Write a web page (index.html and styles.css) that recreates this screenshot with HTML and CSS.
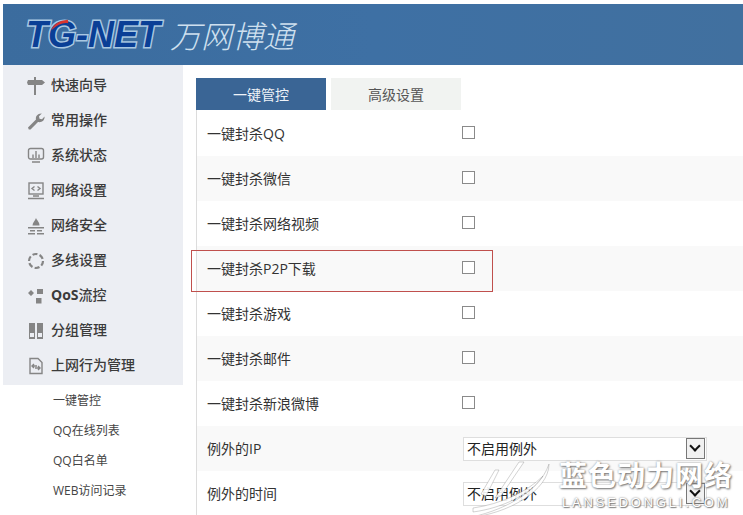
FILE: index.html
```html
<!DOCTYPE html>
<html lang="zh-CN">
<head>
    <meta charset="UTF-8">
    <meta name="viewport" content="width=device-width, initial-scale=1.0">
    <title>TG-NET 万网博通</title>
    <link rel="stylesheet" href="styles.css">
</head>
<body>
    <div class="page">
        <div class="top-bar">
            <span class="logo-en">TG-NET<svg class="logo-swoosh" viewBox="0 0 22 14"><path d="M1 13C4 6 10 2 20 1c1 2 1 3 0 4-6-1-12 2-19 8z"/></svg></span>
            <span class="logo-cn">万网博通</span>
        </div>
        <div class="layout">
            <div class="sidebar">
                <ul class="menu">
                    <li>
                        <svg viewBox="0 0 18 18"><path d="M7 0h2v3h6l3 2.500L15 8H9v10H7V8H1L0 5.500 1 3h6z"/></svg>
                        <span>快速向导</span>
                    </li>
                    <li>
                        <svg viewBox="0 0 18 18"><path d="M1 15.500 9 7.500C8.300 4.500 10.500 1.300 14.800 1.500L12 4.300l.5 2.500 2.500.5 2.500-2.800C18 8.500 14.500 10.800 11 10L3.500 17.500H1.800z"/></svg>
                        <span>常用操作</span>
                    </li>
                    <li>
                        <svg class="line" viewBox="0 0 18 18"><rect x="1.500" y="1.500" width="15" height="10.500" rx="2"/><path d="M9 4v7M6 7.500V11M12 7.500V11M5 15h8"/></svg>
                        <span>系统状态</span>
                    </li>
                    <li>
                        <svg class="line" viewBox="0 0 18 18"><rect x="2" y="1" width="14" height="11"/><path d="M7.500 4.500 5 6.500l2.500 2M10.500 4.500l2.500 2-2.500 2M1 16.500h16M6 14h6"/></svg>
                        <span>网络设置</span>
                    </li>
                    <li>
                        <svg viewBox="0 0 18 18"><path d="M9 1c1 2.500 3.500 4 3.500 7.500H5.500C5.500 5.500 8 4 9 1zM1 10h16v1.500H1zM3 13h5v1.500H3zM10 13h5v1.500h-5zM1 16h7v1.500H1zM10 16h7v1.500h-7z"/></svg>
                        <span>网络安全</span>
                    </li>
                    <li>
                        <svg class="line wide" viewBox="0 0 18 18"><circle cx="9" cy="9" r="7" stroke-dasharray="5 2.300"/></svg>
                        <span>多线设置</span>
                    </li>
                    <li>
                        <svg viewBox="0 0 18 18"><path d="M1 6l3-3 3 3-3 3zM10 2h6v5h-6zM9 11h5.500v5.500H9z"/></svg>
                        <span><b class="latin">QoS</b>流控</span>
                    </li>
                    <li>
                        <svg viewBox="0 0 18 18"><path d="M2 1h6v16H2zM10 1h6v16h-6z"/><path class="cut" d="M3 11h4v4H3zM11 11h4v4h-4z"/></svg>
                        <span>分组管理</span>
                    </li>
                    <li>
                        <svg class="line" viewBox="0 0 18 18"><path d="M3 1.500h8l4 4v11H3zM7 7l-2 2 2 2M11 9l2 2-2 2M5 9h5M8 11h5"/></svg>
                        <span>上网行为管理</span>
                    </li>
                </ul>
                <ul class="submenu">
                    <li>一键管控</li>
                    <li>QQ在线列表</li>
                    <li>QQ白名单</li>
                    <li>WEB访问记录</li>
                </ul>
            </div>
            <div class="content">
                <div class="tabs">
                    <div class="tab active">一键管控</div>
                    <div class="tab">高级设置</div>
                </div>
                <div class="panel">
                    <div class="row"><span class="row-label">一键封杀QQ</span><span class="check"></span></div>
                    <div class="row"><span class="row-label">一键封杀微信</span><span class="check"></span></div>
                    <div class="row"><span class="row-label">一键封杀网络视频</span><span class="check"></span></div>
                    <div class="row"><span class="row-label">一键封杀P2P下载</span><span class="check"></span></div>
                    <div class="row"><span class="row-label">一键封杀游戏</span><span class="check"></span></div>
                    <div class="row"><span class="row-label">一键封杀邮件</span><span class="check"></span></div>
                    <div class="row"><span class="row-label">一键封杀新浪微博</span><span class="check"></span></div>
                    <div class="row"><span class="row-label">例外的IP</span><span class="select">不启用例外<span class="arrow"></span></span></div>
                    <div class="row"><span class="row-label">例外的时间</span><span class="select">不启用例外<span class="arrow"></span></span></div>
                </div>
            </div>
        </div>
        <div class="red-box"></div>
        <div class="watermark">
            <svg class="swoosh" viewBox="0 0 90 60"><path d="M2 58C34 52 74 34 84 4 84 30 44 54 2 58z"/><path d="M30 38 54 2h5L36 36z"/><path d="M16 34 30 10h4L21 36z"/><path d="M8 48C36 44 62 32 78 16 66 34 38 48 8 52z"/></svg>
            <div class="mark-cn">蓝色动力网络</div>
            <div class="mark-en">LANSEDONGLI.COM</div>
        </div>
    </div>
</body>
</html>
```

FILE: styles.css
```css
html, body {
    margin: 0;
    padding: 0;
    background-color: #fff;
}

.page {
    position: relative;
    width: 743px;
    height: 515px;
    overflow: hidden;
    padding: 4px 0 0 3px;
    box-sizing: border-box;
    font-family: "Open Sans", "Noto Sans CJK SC", sans-serif;
    color: #333;
}

.top-bar {
    height: 61px;
    display: flex;
    align-items: center;
    gap: 10px;
    padding-left: 23px;
    background: linear-gradient(90deg, #3b6c9e, #3e70a4 50%, #41709f);
}

.logo-en {
    position: relative;
    font-family: "Liberation Sans", sans-serif;
    font-size: 36px;
    font-weight: bold;
    font-style: italic;
    color: #0a3f96;
    -webkit-text-stroke: 3px #a9c8e2;
    paint-order: stroke fill;
}

.logo-swoosh {
    position: absolute;
    left: 24px;
    top: 5px;
    width: 20px;
    height: 12px;
    fill: #d8352f;
}

.logo-cn {
    font-family: "Noto Sans CJK SC", sans-serif;
    font-size: 31px;
    font-style: italic;
    font-weight: 300;
    color: #cfe0ef;
}

.layout {
    display: flex;
}

.sidebar {
    width: 180px;
    flex: none;
}

.menu,
.submenu {
    list-style: none;
    margin: 0;
    padding: 0;
}

.menu {
    background-color: #eceef3;
    height: 320px;
    padding-top: 3px;
    box-sizing: border-box;
}

.menu li {
    height: 35px;
    display: flex;
    align-items: center;
    gap: 6px;
    padding-left: 24px;
    font-size: 14px;
    font-weight: 500;
    line-height: 32px;
    color: #3b3b3b;
}

.menu li span {
    position: relative;
    top: -1px;
}

.menu svg {
    width: 18px;
    height: 18px;
    flex: none;
    fill: #858585;
}

.menu svg.line {
    fill: none;
    stroke: #858585;
    stroke-width: 1.400;
}

.menu svg.wide {
    stroke-width: 2.200;
}

.menu .cut {
    fill: #eceef3;
}

.latin {
    font-size: 14px;
    font-weight: bold;
}

.submenu {
    padding-top: 1px;
}

.submenu li {
    height: 30px;
    line-height: 30px;
    padding-left: 50px;
    font-size: 12px;
    color: #444;
}

.content {
    flex: 1;
    padding: 13px 0 0 13px;
}

.tabs {
    display: flex;
    gap: 5px;
}

.tab {
    width: 130px;
    height: 32px;
    line-height: 34px;
    text-align: center;
    font-size: 14px;
    color: #555;
    background-color: #f1f3f1;
}

.tab.active {
    color: #eef3f8;
    background-color: #3a6595;
}

.panel {
    border-left: 1px solid #dcdcdc;
    padding-top: 1px;
}

.row {
    height: 45px;
    display: flex;
    align-items: center;
    padding-left: 10px;
    font-size: 14px;
    color: #333;
}

.row:nth-child(even) {
    background-color: #f9f9f9;
}

.row-label {
    width: 256px;
    flex: none;
    margin-bottom: 2px;
}

.check {
    width: 11px;
    height: 11px;
    margin-left: -1px;
    margin-bottom: 3px;
    border: 1px solid #8a8a8a;
    background-color: #fff;
}

.select {
    width: 244px;
    height: 24px;
    line-height: 24px;
    display: flex;
    justify-content: space-between;
    align-items: center;
    box-sizing: border-box;
    padding: 0 0 0 3px;
    border: 1px solid #dedede;
    background-color: #fff;
    color: #222;
}

.arrow {
    position: relative;
    width: 17px;
    height: 19px;
    margin-right: 1px;
    border: 1px solid #777;
    background-color: #f1f1f1;
}

.arrow::after {
    content: "";
    position: absolute;
    left: 4px;
    top: 3px;
    width: 6px;
    height: 6px;
    border-right: 2px solid #111;
    border-bottom: 2px solid #111;
    transform: rotate(45deg);
}

.red-box {
    position: absolute;
    left: 191px;
    top: 250px;
    width: 300px;
    height: 40px;
    border: 1px solid #c0504d;
}

.watermark {
    position: absolute;
    left: 465px;
    top: 460px;
    width: 278px;
    height: 55px;
}

.swoosh {
    position: absolute;
    left: 0;
    top: 0;
    width: 90px;
    height: 60px;
    fill: rgba(255, 255, 255, .9);
    stroke: rgba(130, 130, 130, .5);
    stroke-width: .7;
}

.mark-cn {
    position: absolute;
    left: 94px;
    top: -3px;
    font-family: "Noto Sans CJK SC", sans-serif;
    font-size: 28px;
    line-height: 34px;
    letter-spacing: 1px;
    font-weight: bold;
    white-space: nowrap;
    color: #fff;
    text-shadow: 1px 1px 2px #777, 0 0 2px #999;
}

.mark-en {
    position: absolute;
    left: 97px;
    top: 35px;
    font-family: "Liberation Sans", sans-serif;
    font-size: 13px;
    line-height: 15px;
    letter-spacing: 2.800px;
    white-space: nowrap;
    color: #fff;
    text-shadow: 0 0 2px #666, 1px 1px 1px #888;
}
```
